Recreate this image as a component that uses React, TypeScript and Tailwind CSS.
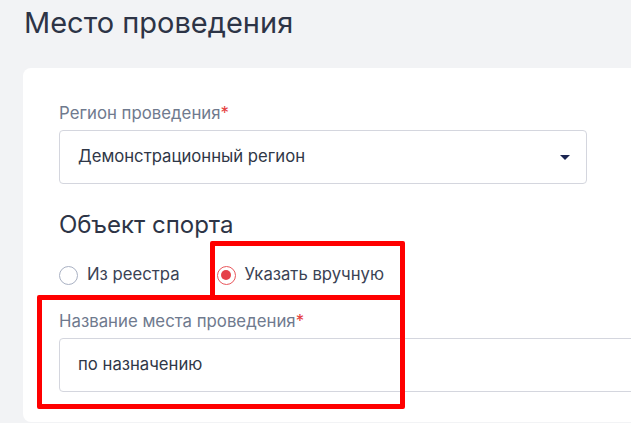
import React from "react";

function Radio({ checked }: { checked?: boolean }) {
  return (
    <span
      className={
        checked
          ? "flex h-[19px] w-[19px] shrink-0 items-center justify-center rounded-full border border-[#e9575c]"
          : "flex h-[19px] w-[19px] shrink-0 items-center justify-center rounded-full border border-[#a9b1c3]"
      }
    >
      {checked && <span className="h-[10px] w-[10px] rounded-full bg-[#e5414a]" />}
    </span>
  );
}

function App() {
  return (
    <div className="relative h-[423px] w-[631px] overflow-hidden bg-[#f2f3f5] font-['Inter',sans-serif]">
      <h1 className="pl-6 pt-[5px] text-[29px] leading-[35px] text-[#2d3446]">
        Место проведения
      </h1>

      <div className="ml-[23px] mt-[28px] w-[720px] rounded-lg bg-white pl-[36px] pt-[35px] pb-[30px]">
        {/* регион */}
        <div className="text-[16.8px] leading-5 text-[#6f7a8e]">
          Регион проведения<span className="text-[#e53e3e]">*</span>
        </div>
        <div className="mt-[7px] flex h-[54px] w-[528px] items-center justify-between rounded border border-[#d4d6de] pl-[18px] pr-[16px]">
          <span className="text-[16.7px] text-[#2f3747]">Демонстрационный регион</span>
          <svg width="10" height="5" viewBox="0 0 10 5">
            <path d="M0 0h10L5 5z" fill="#1b2551" />
          </svg>
        </div>

        {/* объект спорта */}
        <h2 className="mt-[26px] text-[24px] leading-[30px] text-[#2d3446]">Объект спорта</h2>
        <div className="mt-[23px] flex h-6 items-center text-[16.7px] text-[#3a4254]">
          <Radio />
          <span className="ml-[9px]">Из реестра</span>
          <span className="ml-[37px]">
            <Radio checked />
          </span>
          <span className="ml-[9px]">Указать вручную</span>
        </div>

        <div className="mt-[24px] text-[16.8px] leading-5 text-[#6f7a8e]">
          Название места проведения<span className="text-[#e53e3e]">*</span>
        </div>
        <div className="mt-[7px] flex h-[54px] w-[680px] items-center rounded border border-[#d4d6de] pl-[18px]">
          <span className="text-[16.7px] text-[#2f3747]">по назначению</span>
        </div>
      </div>

      {/* red annotation frames */}
      <div className="absolute left-[210px] top-[241px] h-[59px] w-[195px] rounded-[2px] border-[5px] border-[#ff0000]" />
      <div className="absolute left-[37px] top-[295px] h-[114px] w-[368px] rounded-[2px] border-[5px] border-[#ff0000]" />
    </div>
  );
}

export default App;
